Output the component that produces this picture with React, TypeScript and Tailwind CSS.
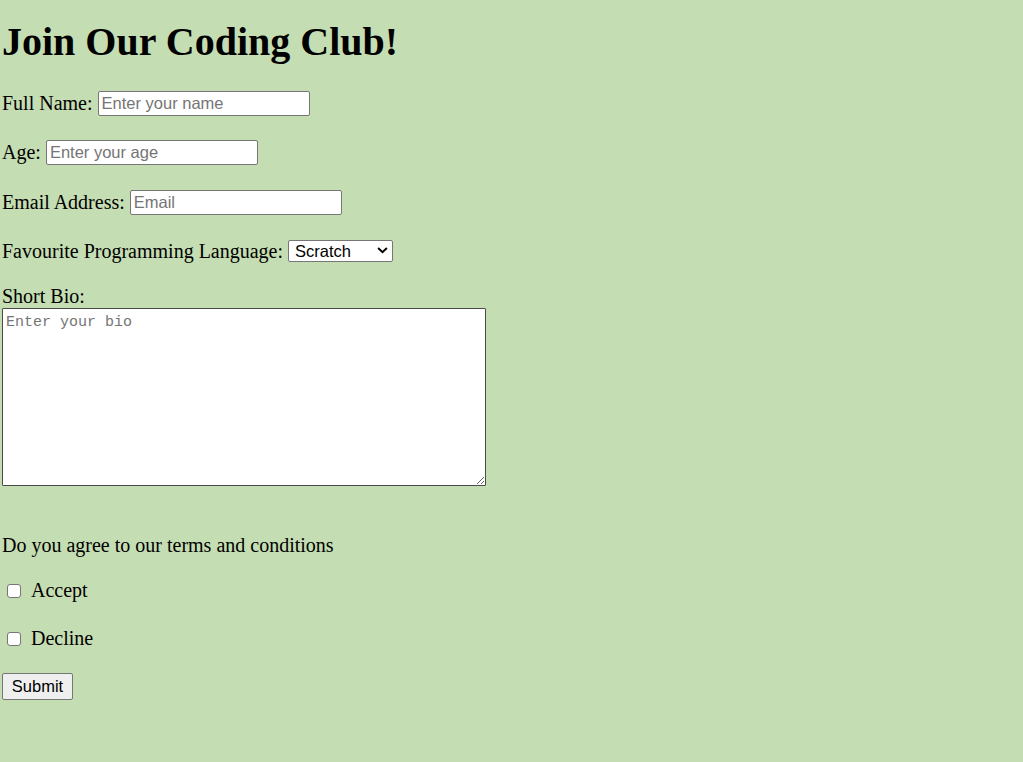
const inputCls =
  "h-[25px] w-[212px] rounded-[2px] border border-[#767676] bg-white px-[3px] font-['Liberation_Sans',Arial,sans-serif] text-[16.5px] text-black placeholder:text-[#757575] outline-none";

const App = () => {
  return (
    <div className="min-h-screen bg-[#c5ddb2] px-[2px] pt-[19px] pb-10 font-['Liberation_Serif','Times_New_Roman',serif] text-[20px] text-black">
      <h1 className="text-[40px] font-bold leading-[46px]">Join Our Coding Club!</h1>
      <form className="flex flex-col items-start" onSubmit={(e) => e.preventDefault()}>
        <div className="mt-[25px] flex h-[26px] items-center gap-[5px]">
          <label htmlFor="name" className="leading-[23px]">Full Name:</label>
          <input id="name" type="text" placeholder="Enter your name" className={inputCls} />
        </div>
        <div className="mt-[23px] flex h-[26px] items-center gap-[5px]">
          <label htmlFor="age" className="leading-[23px]">Age:</label>
          <input id="age" type="text" placeholder="Enter your age" className={inputCls} />
        </div>
        <div className="mt-[24px] flex h-[26px] items-center gap-[5px]">
          <label htmlFor="email" className="leading-[23px]">Email Address:</label>
          <input id="email" type="email" placeholder="Email" className={inputCls} />
        </div>
        <div className="mt-[23px] flex h-[26px] items-center gap-[5px]">
          <label htmlFor="lang" className="leading-[23px]">Favourite Programming Language:</label>
          <div className="relative h-[22px] w-[105px]">
            <select
              id="lang"
              defaultValue="Scratch"
              className="block h-full w-full appearance-none rounded-[2px] border border-[#767676] bg-white pl-[6px] font-['Liberation_Sans',Arial,sans-serif] text-[16.5px] leading-[20px] text-black outline-none"
            >
              <option>Scratch</option>
              <option>Python</option>
              <option>JavaScript</option>
            </select>
            <svg
              viewBox="0 0 12 8"
              className="pointer-events-none absolute right-[5px] top-[7px] h-[7px] w-[11px]"
              fill="none"
              stroke="black"
              strokeWidth="2.2"
            >
              <path d="M1 1.2 L6 6 L11 1.2" />
            </svg>
          </div>
        </div>
        <label htmlFor="bio" className="mt-[21px] leading-[23px]">Short Bio:</label>
        <textarea
          id="bio"
          placeholder="Enter your bio"
          className="h-[178px] w-[484px] resize rounded-[1px] border border-[#4a4a4a] bg-white px-[3px] py-[3px] font-['Liberation_Mono','Courier_New',monospace] text-[15px] text-black placeholder:text-[#757575] outline-none"
        />
        <p className="mt-[48px] leading-[23px]">Do you agree to our terms and conditions</p>
        <div className="mt-[22px] flex items-center gap-[10px]">
          <input
            id="accept"
            type="checkbox"
            className="ml-[5px] h-[14px] w-[14px] appearance-none rounded-[3px] border border-[#767676] bg-white"
          />
          <label htmlFor="accept" className="leading-[23px]">Accept</label>
        </div>
        <div className="mt-[25px] flex items-center gap-[10px]">
          <input
            id="decline"
            type="checkbox"
            className="ml-[5px] h-[14px] w-[14px] appearance-none rounded-[3px] border border-[#767676] bg-white"
          />
          <label htmlFor="decline" className="leading-[23px]">Decline</label>
        </div>
        <button
          type="submit"
          className="mt-[23px] h-[27px] w-[71px] rounded-[2px] border border-[#767676] bg-[#efefef] font-['Liberation_Sans',Arial,sans-serif] text-[16.5px] text-black"
        >
          Submit
        </button>
      </form>
    </div>
  );
};

export default App;
